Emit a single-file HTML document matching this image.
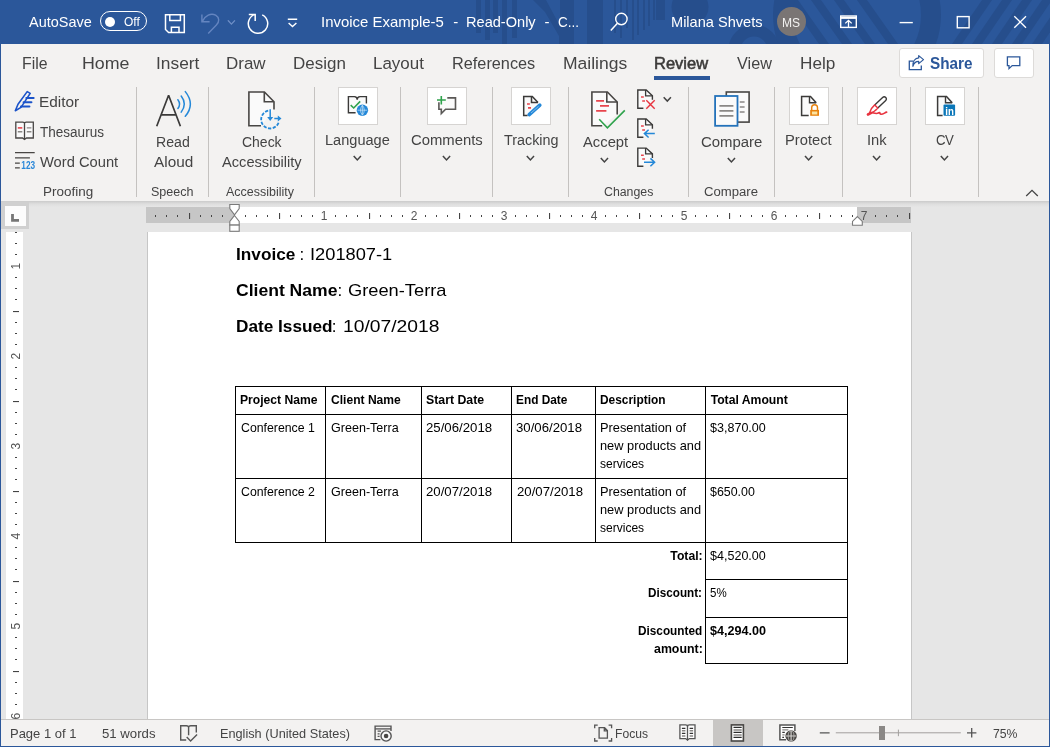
<!DOCTYPE html><html lang="en"><head><meta charset="utf-8"><title>Invoice Example-5 - Read-Only - Word</title><style>
*{box-sizing:border-box;margin:0;padding:0}
html,body{width:1050px;height:747px;overflow:hidden;background:#e6e6e6}
body{font-family:"Liberation Sans",sans-serif;color:#444;position:relative}
.t{position:absolute;white-space:pre;display:block;transform-origin:0 0}
.abs,svg{position:absolute}
svg{overflow:visible}
#win{position:absolute;left:0;top:0;width:1050px;height:747px;overflow:hidden;will-change:transform}
#titlebar{position:absolute;left:0;top:0;width:1050px;height:44px;background:#2b579a;color:#fff;overflow:hidden}
#tabs{position:absolute;left:0;top:44px;width:1050px;height:38px;background:#f3f2f1}
#ribbon{position:absolute;left:0;top:82px;width:1050px;height:119px;background:#f3f2f1}
#ribshadow{position:absolute;left:0;top:201px;width:1050px;height:6px;background:linear-gradient(#cbcbcb,#dedede 50%,#e6e6e6)}
#docarea{position:absolute;left:0;top:205px;width:1050px;height:514px}
#page{position:absolute;left:148px;top:27px;width:763px;height:487px;background:#fff;color:#000}
#status{position:absolute;left:0;top:719px;width:1050px;height:28px;background:#f3f2f1;border-top:1px solid #c8c6c4}
.sep{position:absolute;top:5px;width:1px;height:110px;background:#c4c2c0}
.ibox{position:absolute;top:5px;width:40px;height:38px;background:#fff;border:1px solid #d6d4d2}
.cell{position:absolute;border:1px solid #000}
.wb{position:absolute;background:#2b579a}
</style></head><body><div id="win">
<div id="titlebar">
<svg class="abs" style="left:0;top:0" width="1050" height="44" viewBox="0 0 1050 44"><g fill="#264e8c"><rect x="476" y="0" width="5" height="33"/><rect x="485" y="0" width="5" height="40"/><rect x="493" y="0" width="5" height="33"/><rect x="502" y="0" width="5" height="44"/><rect x="512" y="0" width="5" height="38"/><path d="M533 0 H546 L560 26 V0 H574 V44 H559 V36 L545 12 Z"/><rect x="587" y="0" width="16" height="44"/><rect x="614" y="0" width="2" height="33"/><rect x="620" y="0" width="2" height="38"/><rect x="626" y="0" width="2" height="28"/><rect x="632" y="0" width="2" height="40"/><rect x="637" y="0" width="2" height="35"/><rect x="643" y="0" width="2" height="30"/><rect x="648" y="0" width="2" height="26"/><rect x="653" y="0" width="2" height="20"/><circle cx="690" cy="7" r="18.5"/><rect x="656" y="0" width="9" height="20"/><circle cx="754" cy="50" r="19.5" fill="none" stroke="#264e8c" stroke-width="12"/><path d="M788 0 h10 l31 44 h-10 z"/><path d="M811 0 h10 l31 44 h-10 z"/><path d="M834 0 h10 l31 44 h-10 z"/><path d="M857 0 h10 l31 44 h-10 z"/><circle cx="857" cy="15" r="74" fill="none" stroke="#264e8c" stroke-width="20"/><path d="M952 44 h10 l30 -44 h-10 z"/><path d="M972 44 h10 l30 -44 h-10 z"/><path d="M992 44 h10 l30 -44 h-10 z"/><path d="M1012 44 h10 l30 -44 h-10 z"/><path d="M1032 44 h10 l30 -44 h-10 z"/></g></svg>
<span id="t1" class="t " style="left:29.10px;top:12.00px;font-size:15px;line-height:19px;transform:scaleX(0.9644);color:#fff;">AutoSave</span>
<div class="abs" style="left:100px;top:11px;width:47px;height:20px;border:1.3px solid #fff;border-radius:10px"></div>
<div class="abs" style="left:105px;top:16.5px;width:10px;height:10px;border-radius:5px;background:#fff"></div>
<span id="t2" class="t " style="left:124.23px;top:13.00px;font-size:13px;line-height:17px;transform:scaleX(0.9214);color:#fff;">Off</span>
<svg class="abs" style="left:0;top:0" width="1" height="1" ><g transform="translate(0 0)"><path d="M165.5 14.7 H184.3 V32.6 H168.6 L165.5 29.5 Z M169.8 14.7 V20.6 H180.4 V14.7 M171.4 32.6 V27.3 H179 V32.6" fill="none" stroke="#fff" stroke-width="1.5" stroke-linejoin="miter"/></g></svg>
<svg class="abs" style="left:0;top:0" width="1" height="1" ><g transform="translate(0 0)"><path d="M201.9 14.4 V21.8 H209.6 M202.3 21.4 C205 15.5 211 12.6 215.6 15.2 C219.6 17.6 219.6 21.8 216.4 25 L208.2 33.4" fill="none" stroke="#6485c0" stroke-width="1.4"/></g></svg>
<svg class="abs" style="left:0;top:0" width="1" height="1" ><g transform="translate(0 0)"><path d="M262.2 14.9 A9.7 9.7 0 1 1 255.1 14.4 M248.8 14.4 H255.2 V20.9" fill="none" stroke="#fff" stroke-width="1.5"/></g></svg>
<svg class="abs" style="left:0;top:0" width="1" height="1" ><g transform="translate(0 0)"><path d="M287.8 19.3 H297.2 M288.6 22.9 L292.5 26.5 L296.4 22.9" fill="none" stroke="#fff" stroke-width="1.4"/></g></svg>
<svg class="abs" style="left:0;top:0" width="1" height="1"><path d="M228.30 20.80 l3.10 3.30 l3.10 -3.30" fill="none" stroke="#6f8fc6" stroke-width="1.3" stroke-linecap="square" stroke-linejoin="miter"/></svg>
<span id="t3" class="t " style="left:320.97px;top:12.00px;font-size:15px;line-height:19px;transform:scaleX(0.9956);color:#fff;">Invoice Example-5</span>
<span id="t4" class="t " style="left:453.20px;top:12.00px;font-size:15px;line-height:19px;color:#fff;">-</span>
<span id="t5" class="t " style="left:465.50px;top:12.00px;font-size:15px;line-height:19px;transform:scaleX(0.9716);color:#fff;">Read-Only</span>
<span id="t6" class="t " style="left:544.53px;top:12.00px;font-size:15px;line-height:19px;color:#fff;">-</span>
<span id="t7" class="t " style="left:557.74px;top:12.00px;font-size:15px;line-height:19px;transform:scaleX(0.9006);color:#fff;">C...</span>
<svg class="abs" style="left:0;top:0" width="1" height="1" ><g transform="translate(0 0)"><circle cx="621.4" cy="19" r="5.7" fill="none" stroke="#fff" stroke-width="1.4"/><path d="M617.4 23.2 L610.8 30.6" stroke="#fff" stroke-width="1.5" fill="none"/></g></svg>
<span id="t8" class="t " style="left:671.13px;top:12.00px;font-size:15px;line-height:19px;transform:scaleX(0.9713);color:#fff;">Milana Shvets</span>
<div class="abs" style="left:777px;top:7px;width:29px;height:29px;border-radius:50%;background:#7a7574"></div>
<span id="t9" class="t " style="left:782.02px;top:15.00px;font-size:12px;line-height:16px;transform:scaleX(1.0047);color:#f3f2f1;">MS</span>
<svg class="abs" style="left:0;top:0" width="1" height="1" ><g transform="translate(0 0)"><rect x="840.7" y="16" width="15.6" height="11.4" fill="none" stroke="#fff" stroke-width="1.4"/><path d="M840.7 17.8 H856.3" stroke="#fff" stroke-width="2.2"/><path d="M848.5 27 V20.6 M845.3 23.4 L848.5 20.3 L851.7 23.4" fill="none" stroke="#fff" stroke-width="1.3"/></g></svg>
<svg class="abs" style="left:0;top:0" width="1" height="1" ><g transform="translate(0 0)"><path d="M899.6 22.6 H912.8" stroke="#fff" stroke-width="1.4"/><rect x="957.3" y="16.6" width="11.8" height="11.2" fill="none" stroke="#fff" stroke-width="1.4"/><path d="M1014.3 16.2 L1026 27.8 M1026 16.2 L1014.3 27.8" stroke="#fff" stroke-width="1.4"/></g></svg>
</div>
<div id="tabs">
<span id="t10" class="t " style="left:21.66px;top:9.00px;font-size:16.3px;line-height:20px;transform:scaleX(0.9708);">File</span>
<span id="t11" class="t " style="left:82.45px;top:9.00px;font-size:16.3px;line-height:20px;transform:scaleX(1.0937);">Home</span>
<span id="t12" class="t " style="left:156.09px;top:9.00px;font-size:16.3px;line-height:20px;transform:scaleX(1.0648);">Insert</span>
<span id="t13" class="t " style="left:226.27px;top:9.00px;font-size:16.3px;line-height:20px;transform:scaleX(1.0421);">Draw</span>
<span id="t14" class="t " style="left:293.25px;top:9.00px;font-size:16.3px;line-height:20px;transform:scaleX(1.0424);">Design</span>
<span id="t15" class="t " style="left:372.66px;top:9.00px;font-size:16.3px;line-height:20px;transform:scaleX(1.0413);">Layout</span>
<span id="t16" class="t " style="left:452.01px;top:9.00px;font-size:16.3px;line-height:20px;">References</span>
<span id="t17" class="t " style="left:563.39px;top:9.00px;font-size:16.3px;line-height:20px;transform:scaleX(1.0738);">Mailings</span>
<span id="t18" class="t " style="left:653.80px;top:9.00px;font-size:16.3px;line-height:20px;transform:scaleX(1.0133);color:#3b3a39;-webkit-text-stroke:0.55px #3b3a39;">Review</span>
<span id="t19" class="t " style="left:737.13px;top:9.00px;font-size:16.3px;line-height:20px;transform:scaleX(0.9961);">View</span>
<span id="t20" class="t " style="left:800.00px;top:9.00px;font-size:16.3px;line-height:20px;transform:scaleX(1.0543);">Help</span>
<div class="abs" style="left:654px;top:32px;width:56px;height:4px;background:#2b579a"></div>
<div class="abs" style="left:899px;top:4px;width:85px;height:30px;background:#fff;border:1px solid #dddbd9;border-radius:3px"></div>
<svg class="abs" style="left:0;top:0" width="1" height="1" ><g transform="translate(0 -44)"><path d="M913.4 61.1 H909.3 V69.7 H921.3 V65.4" fill="none" stroke="#2b579a" stroke-width="1.3"/><path d="M918.7 55.6 L923.5 59.6 L918.7 63.6 V61.3 C915.6 61.3 913.8 63 912.9 66.3 C912.6 61.4 915 58.2 918.7 57.9 Z" fill="none" stroke="#2b579a" stroke-width="1.2" stroke-linejoin="round"/></g></svg>
<span id="t21" class="t " style="left:929.89px;top:9.00px;font-size:16.3px;line-height:20px;transform:scaleX(0.9387);font-weight:700;color:#2b579a;">Share</span>
<div class="abs" style="left:994px;top:4px;width:40px;height:30px;background:#fff;border:1px solid #dddbd9;border-radius:3px"></div>
<svg class="abs" style="left:0;top:0" width="1" height="1" ><g transform="translate(0 -44)"><path d="M1007.4 56.9 H1019.8 V65.6 H1012.2 L1009 68.6 V65.6 H1007.4 Z" fill="none" stroke="#2b579a" stroke-width="1.3" stroke-linejoin="miter"/></g></svg>
</div>
<div id="ribbon">
<div class="sep" style="left:136px"></div>
<div class="sep" style="left:208px"></div>
<div class="sep" style="left:314px"></div>
<div class="sep" style="left:400px"></div>
<div class="sep" style="left:492px"></div>
<div class="sep" style="left:568px"></div>
<div class="sep" style="left:688px"></div>
<div class="sep" style="left:774px"></div>
<div class="sep" style="left:842px"></div>
<div class="sep" style="left:910px"></div>
<div class="sep" style="left:978px"></div>
<div class="ibox" style="left:338px"></div>
<div class="ibox" style="left:427px"></div>
<div class="ibox" style="left:511px"></div>
<div class="ibox" style="left:789px"></div>
<div class="ibox" style="left:857px"></div>
<div class="ibox" style="left:925px"></div>
<span id="t22" class="t " style="left:39.13px;top:10.00px;font-size:15.2px;line-height:19px;transform:scaleX(1.0107);">Editor</span>
<span id="t23" class="t " style="left:40.02px;top:40.00px;font-size:15.2px;line-height:19px;transform:scaleX(0.8908);">Thesaurus</span>
<span id="t24" class="t " style="left:39.82px;top:70.00px;font-size:15.2px;line-height:19px;transform:scaleX(0.9679);">Word Count</span>
<span id="t25" class="t " style="left:43.12px;top:102.00px;font-size:12.5px;line-height:16px;transform:scaleX(1.0776);">Proofing</span>
<span id="t26" class="t " style="left:156.26px;top:50.00px;font-size:15.2px;line-height:19px;transform:scaleX(0.9297);">Read</span>
<span id="t27" class="t " style="left:154.16px;top:70.00px;font-size:15.2px;line-height:19px;transform:scaleX(1.0101);">Aloud</span>
<span id="t28" class="t " style="left:151.02px;top:102.00px;font-size:12.5px;line-height:16px;transform:scaleX(1.0030);">Speech</span>
<span id="t29" class="t " style="left:241.60px;top:50.00px;font-size:15.2px;line-height:19px;transform:scaleX(0.9201);">Check</span>
<span id="t30" class="t " style="left:221.80px;top:70.00px;font-size:15.2px;line-height:19px;transform:scaleX(0.9635);">Accessibility</span>
<span id="t31" class="t " style="left:226.09px;top:102.00px;font-size:12.5px;line-height:16px;transform:scaleX(0.9976);">Accessibility</span>
<span id="t32" class="t " style="left:325.22px;top:48.00px;font-size:15.2px;line-height:19px;transform:scaleX(0.9592);">Language</span>
<span id="t33" class="t " style="left:410.54px;top:48.00px;font-size:15.2px;line-height:19px;transform:scaleX(0.9776);">Comments</span>
<span id="t34" class="t " style="left:503.72px;top:48.00px;font-size:15.2px;line-height:19px;transform:scaleX(0.9449);">Tracking</span>
<span id="t35" class="t " style="left:582.80px;top:50.00px;font-size:15.2px;line-height:19px;transform:scaleX(0.9732);">Accept</span>
<span id="t36" class="t " style="left:603.74px;top:102.00px;font-size:12.5px;line-height:16px;transform:scaleX(0.9861);">Changes</span>
<span id="t37" class="t " style="left:700.53px;top:50.00px;font-size:15.2px;line-height:19px;transform:scaleX(0.9826);">Compare</span>
<span id="t38" class="t " style="left:704.35px;top:102.00px;font-size:12.5px;line-height:16px;transform:scaleX(1.0514);">Compare</span>
<span id="t39" class="t " style="left:784.87px;top:48.00px;font-size:15.2px;line-height:19px;transform:scaleX(0.9701);">Protect</span>
<span id="t40" class="t " style="left:867.15px;top:48.00px;font-size:15.2px;line-height:19px;transform:scaleX(0.9685);">Ink</span>
<span id="t41" class="t " style="left:935.67px;top:48.00px;font-size:15.2px;line-height:19px;transform:scaleX(0.8698);letter-spacing:-0.593px;">CV</span>
<svg class="abs" style="left:0;top:0" width="1" height="1"><path d="M354.20 74.60 l3.10 3.30 l3.10 -3.30" fill="none" stroke="#444" stroke-width="1.5" stroke-linecap="square" stroke-linejoin="miter"/></svg>
<svg class="abs" style="left:0;top:0" width="1" height="1"><path d="M443.40 74.60 l3.10 3.30 l3.10 -3.30" fill="none" stroke="#444" stroke-width="1.5" stroke-linecap="square" stroke-linejoin="miter"/></svg>
<svg class="abs" style="left:0;top:0" width="1" height="1"><path d="M527.30 74.60 l3.10 3.30 l3.10 -3.30" fill="none" stroke="#444" stroke-width="1.5" stroke-linecap="square" stroke-linejoin="miter"/></svg>
<svg class="abs" style="left:0;top:0" width="1" height="1"><path d="M805.50 74.60 l3.10 3.30 l3.10 -3.30" fill="none" stroke="#444" stroke-width="1.5" stroke-linecap="square" stroke-linejoin="miter"/></svg>
<svg class="abs" style="left:0;top:0" width="1" height="1"><path d="M873.50 74.60 l3.10 3.30 l3.10 -3.30" fill="none" stroke="#444" stroke-width="1.5" stroke-linecap="square" stroke-linejoin="miter"/></svg>
<svg class="abs" style="left:0;top:0" width="1" height="1"><path d="M941.30 74.60 l3.10 3.30 l3.10 -3.30" fill="none" stroke="#444" stroke-width="1.5" stroke-linecap="square" stroke-linejoin="miter"/></svg>
<svg class="abs" style="left:0;top:0" width="1" height="1"><path d="M601.30 76.60 l3.10 3.30 l3.10 -3.30" fill="none" stroke="#444" stroke-width="1.5" stroke-linecap="square" stroke-linejoin="miter"/></svg>
<svg class="abs" style="left:0;top:0" width="1" height="1"><path d="M728.30 76.60 l3.10 3.30 l3.10 -3.30" fill="none" stroke="#444" stroke-width="1.5" stroke-linecap="square" stroke-linejoin="miter"/></svg>
<svg class="abs" style="left:0;top:0" width="1" height="1"><path d="M664.20 15.80 l3.10 3.30 l3.10 -3.30" fill="none" stroke="#444" stroke-width="1.5" stroke-linecap="square" stroke-linejoin="miter"/></svg>
<svg class="abs" style="left:0;top:0" width="1" height="1"><path d="M1026.2 114.0 l5.8 -5.6 l5.8 5.6" fill="none" stroke="#444" stroke-width="1.3"/></svg>
<svg class="abs" style="left:0;top:0" width="1" height="1" ><g transform="translate(0 -82)"><path d="M15.3 110.7 L18 104.2 L27.2 91.6 L30.2 93.4 L21 107.4 Z" fill="#f3f2f1" stroke="#1b53c9" stroke-width="1.6" stroke-linejoin="round"/><path d="M26.4 98 H33.6 M23.6 102.3 H31.4 M21 106.5 H29.4" stroke="#1b53c9" stroke-width="2.1" stroke-linecap="round"/></g></svg>
<svg class="abs" style="left:0;top:0" width="1" height="1" ><g transform="translate(0 -82)"><path d="M24.5 122.9 V139.4 M15.8 122.2 H22.8 Q24.5 122.2 24.5 123.6 Q24.5 122.2 26.2 122.2 H33.3 V138 H26.5 L24.5 139.5 L22.5 138 H15.8 Z" fill="#fafafa" stroke="#484644" stroke-width="1.3"/><path d="M17.8 127.9 H22.3" stroke="#e8464e" stroke-width="1.6"/><path d="M17.8 131.8 H22.3 M26.8 127.9 H31.4 M26.8 131.8 H31.4" stroke="#8a8886" stroke-width="1.4"/></g></svg>
<svg class="abs" style="left:0;top:0" width="1" height="1" ><g transform="translate(0 -82)"><path d="M15 152.6 H34.7 M15 157.9 H29.9 M15 163.1 H19.8 M15 167.9 H19.8" stroke="#484644" stroke-width="1.4"/><text x="21.3" y="168.6" font-family="Liberation Sans, sans-serif" font-weight="700" font-size="10.2" fill="#2b88d8" textLength="13.8" lengthAdjust="spacingAndGlyphs">123</text></g></svg>
<svg class="abs" style="left:0;top:0" width="1" height="1" ><g transform="translate(0 -82)"><path d="M156.7 126.2 L168.6 95.2 L180.4 126.2 M161.4 114.8 H175.8" fill="none" stroke="#3b3a39" stroke-width="1.7" stroke-linejoin="bevel"/><path d="M177.9 99.7 Q181.2 104.1 177.9 108.5 M181.2 96 Q187.4 104 181.2 112.1 M185.3 91.6 Q195.4 104 185.3 116.3" fill="none" stroke="#2488d8" stroke-width="1.5" stroke-linecap="round"/></g></svg>
<svg class="abs" style="left:0;top:0" width="1" height="1" ><g transform="translate(0 -82)"><path d="M261 125.8 H248.9 V92 H264.4 L274 101.8 V109.6" fill="#fafafa" stroke="#484644" stroke-width="1.6"/><path d="M264.3 92 V101.8 H274" fill="none" stroke="#484644" stroke-width="1.6"/><path d="M268.2 110.7 A9 9 0 1 0 278.9 121.6" fill="none" stroke="#2488d8" stroke-width="1.8" stroke-dasharray="3.3 1.5"/><path d="M270.2 109.2 V118 M274.3 118.4 H279" stroke="#2488d8" stroke-width="1.5" fill="none"/><path d="M267.2 117 H273.2 L270.2 121 Z M277.8 115.4 L281.5 118.4 L277.8 121.4 Z" fill="#2488d8"/></g></svg>
<svg class="abs" style="left:0;top:0" width="1" height="1" ><g transform="translate(0 -82)"><path d="M355.6 112.8 H348.4 V96.6 H354.4 Q357.2 96.6 357.2 99.8 Q357.2 96.6 360 96.6 H366.4 V103.6" fill="#fafafa" stroke="#3b3a39" stroke-width="1.4"/><path d="M350.7 105.2 L353.7 108 L360.2 101.4" fill="none" stroke="#2fa24c" stroke-width="1.6"/><circle cx="362.4" cy="110.2" r="5.7" fill="#2488d8"/><path d="M357.6 110.2 H367.2 M362.4 105.4 V115 M362.4 105.2 Q358.6 110.2 362.4 115.2 Q366.2 110.2 362.4 105.2" fill="none" stroke="#cfe6f8" stroke-width="0.7"/></g></svg>
<svg class="abs" style="left:0;top:0" width="1" height="1" ><g transform="translate(0 -82)"><path d="M447.3 97.9 H455.5 V109.3 H445.6 L441.3 113.6 V109.3 H438.9 V102.2" fill="#fafafa" stroke="#5a5856" stroke-width="1.6"/><path d="M437 100 H445.8 M441.3 95.9 V104.6" stroke="#2fa24c" stroke-width="1.6"/></g></svg>
<svg class="abs" style="left:0;top:0" width="1" height="1" ><g transform="translate(0 -82)"><path d="M527.6 115.5 H523.7 V96.6 H532.3 L538 102.5" fill="#fafafa" stroke="#3b3a39" stroke-width="1.5"/><path d="M531.5 96.6 V102.6 H538" fill="none" stroke="#3b3a39" stroke-width="1.5"/><path d="M527 104 H529.9 M528 107.8 H531" stroke="#e8464e" stroke-width="1.7"/><path d="M529.2 114.6 L539.8 105.2" stroke="#2488d8" stroke-width="3.6" stroke-linecap="round"/><path d="M531 113 L538.6 106.3" stroke="#a9d3f2" stroke-width="0.7"/><path d="M528.4 115.4 L529.4 113.2 L530.6 114.6 Z" fill="#2488d8"/></g></svg>
<svg class="abs" style="left:0;top:0" width="1" height="1" ><g transform="translate(0 -82)"><path d="M602.2 125.8 H591.9 V92 H607.4 L617.2 102 V114.4" fill="#fafafa" stroke="#484644" stroke-width="1.6"/><path d="M606.8 92 V102 H617.2" fill="none" stroke="#484644" stroke-width="1.6"/><path d="M596.1 100.8 H604 M600 105.9 H609 M596.1 110.8 H606.4" stroke="#e8464e" stroke-width="1.8"/><path d="M599.2 119.3 L607.4 127.8 L624.8 110.4" fill="none" stroke="#2fa24c" stroke-width="1.6"/></g></svg>
<svg class="abs" style="left:0;top:0" width="1" height="1" ><g transform="translate(0 -82)"><path d="M643.4 108.2 H637.8 V90.0 H646.2 L652.4 95.8 V99.8" fill="#fafafa" stroke="#3b3a39" stroke-width="1.4"/><path d="M645.6 90.0 V95.8 H652.4" fill="none" stroke="#3b3a39" stroke-width="1.3"/><path d="M641 97.1 H643.8 M642.2 100.9 H645" stroke="#e8464e" stroke-width="1.5"/><path d="M646.3 100.3 L654.7 108.7 M654.7 100.3 L646.3 108.7" stroke="#e8333f" stroke-width="1.4"/></g></svg>
<svg class="abs" style="left:0;top:0" width="1" height="1" ><g transform="translate(0 -82)"><path d="M643.4 137.2 H637.8 V119.0 H646.2 L652.4 124.8 V128.8" fill="#fafafa" stroke="#3b3a39" stroke-width="1.4"/><path d="M645.6 119.0 V124.8 H652.4" fill="none" stroke="#3b3a39" stroke-width="1.3"/><path d="M641 126.1 H643.8 M642.2 129.9 H645" stroke="#e8464e" stroke-width="1.5"/><path d="M654.8 133.6 H644.6 M648.6 129.7 L644.4 133.6 L648.6 137.5" fill="none" stroke="#2488d8" stroke-width="1.5"/></g></svg>
<svg class="abs" style="left:0;top:0" width="1" height="1" ><g transform="translate(0 -82)"><path d="M643.4 166.3 H637.8 V148.1 H646.2 L652.4 153.9 V157.9" fill="#fafafa" stroke="#3b3a39" stroke-width="1.4"/><path d="M645.6 148.1 V153.9 H652.4" fill="none" stroke="#3b3a39" stroke-width="1.3"/><path d="M641 155.2 H643.8 M642.2 159.0 H645" stroke="#e8464e" stroke-width="1.5"/><path d="M644 162.3 H654.4 M650.4 158.4 L654.6 162.3 L650.4 166.2" fill="none" stroke="#2488d8" stroke-width="1.5"/></g></svg>
<svg class="abs" style="left:0;top:0" width="1" height="1" ><g transform="translate(0 -82)"><rect x="726.3" y="92" width="22.8" height="30.1" fill="#fafafa" stroke="#484644" stroke-width="1.6"/><path d="M739.8 102.1 H744.6 M739.8 107.1 H744.6 M739.8 112 H744.6" stroke="#8a8886" stroke-width="1.5"/><rect x="715.1" y="96" width="22.4" height="29.8" fill="#fafafa" stroke="#2372ba" stroke-width="1.8"/><path d="M719.4 105.9 H733.4 M719.4 110.8 H733.4 M719.4 115.8 H733.4" stroke="#8a8886" stroke-width="1.7"/></g></svg>
<svg class="abs" style="left:0;top:0" width="1" height="1" ><g transform="translate(0 -82)"><path d="M808.7 115.5 H801.6 V96.6 H810.5 L816.2 102.8" fill="#fafafa" stroke="#3b3a39" stroke-width="1.5"/><path d="M809.5 96.6 V102.8 H816.2" fill="none" stroke="#3b3a39" stroke-width="1.4"/><path d="M811.7 110 V107.6 A2.9 2.9 0 0 1 817.5 107.6 V110" fill="none" stroke="#e8820c" stroke-width="1.4"/><rect x="810.2" y="109.9" width="8.8" height="5.9" fill="#e8820c"/><rect x="811.9" y="111.5" width="5.4" height="3" fill="#fbe3a0"/></g></svg>
<svg class="abs" style="left:0;top:0" width="1" height="1" ><g transform="translate(0 -82)"><path d="M874.7 104.9 L882.6 97.4 A2.2 2.2 0 0 1 885.7 100.6 L877.8 108.1" fill="#fff" stroke="#3b3a39" stroke-width="1.4"/><path d="M874.7 104.9 C871.6 107.4 870.4 110 869.2 113.4 C872.6 112.6 875.4 111 877.8 108.1 Z" fill="#fff" stroke="#e8333f" stroke-width="1.4" stroke-linejoin="round"/><path d="M867.6 114.3 C869.4 113.4 871 112.4 873 112.8 C875 113.4 876.6 114.2 878.8 112.8 C880.2 111.9 879.4 113.8 880.8 114.2 C883 114.6 884.8 112.6 886.6 112.2" fill="none" stroke="#e8333f" stroke-width="1.7" stroke-linecap="round"/><path d="M868 114.6 L871.2 112.9" stroke="#e8333f" stroke-width="2.4" stroke-linecap="round"/></g></svg>
<svg class="abs" style="left:0;top:0" width="1" height="1" ><g transform="translate(0 -82)"><path d="M942.6 115.5 H937.6 V96.6 H946.5 L952.2 102.8" fill="#fafafa" stroke="#3b3a39" stroke-width="1.5"/><path d="M945.5 96.6 V102.8 H952.2" fill="none" stroke="#3b3a39" stroke-width="1.4"/><rect x="943.5" y="104.6" width="11.6" height="11.2" rx="1" fill="#0a76b8"/><text x="945.3" y="114.6" font-family="Liberation Sans, sans-serif" font-weight="700" font-size="11" fill="#fff" textLength="8.6" lengthAdjust="spacingAndGlyphs">in</text></g></svg>
</div>
<div id="ribshadow"></div>
<div id="docarea">
<div class="abs" style="left:1px;top:-3px;width:28px;height:27px;background:#d0d0d0"></div>
<div class="abs" style="left:5px;top:1px;width:21px;height:19.5px;background:#fcfcfc"></div>
<svg class="abs" style="left:0;top:0" width="1" height="1"><path d="M12.5 9 V15.4 H19" fill="none" stroke="#767676" stroke-width="2.8"/></svg>
<div class="abs" style="left:146px;top:2px;width:765px;height:16px;background:#c6c6c6"></div>
<div class="abs" style="left:234px;top:2px;width:623px;height:16px;background:#fff"></div>
<div class="abs" style="left:6px;top:27px;width:17px;height:487px;background:#fff"></div>
<svg class="abs" style="left:0;top:0" width="1" height="1" font-family="Liberation Sans, sans-serif" font-size="12" fill="#555"><rect x="155" y="10" width="1" height="2" fill="#444"/><rect x="166" y="10" width="1" height="2" fill="#444"/><rect x="177" y="10" width="1" height="2" fill="#444"/><rect x="189" y="8" width="1.1" height="6" fill="#444"/><rect x="200" y="10" width="1" height="2" fill="#444"/><rect x="211" y="10" width="1" height="2" fill="#444"/><rect x="222" y="10" width="1" height="2" fill="#444"/><rect x="245" y="10" width="1" height="2" fill="#444"/><rect x="256" y="10" width="1" height="2" fill="#444"/><rect x="267" y="10" width="1" height="2" fill="#444"/><rect x="279" y="8" width="1.1" height="6" fill="#444"/><rect x="290" y="10" width="1" height="2" fill="#444"/><rect x="301" y="10" width="1" height="2" fill="#444"/><rect x="312" y="10" width="1" height="2" fill="#444"/><text x="324.1" y="15.2" text-anchor="middle">1</text><rect x="335" y="10" width="1" height="2" fill="#444"/><rect x="346" y="10" width="1" height="2" fill="#444"/><rect x="357" y="10" width="1" height="2" fill="#444"/><rect x="369" y="8" width="1.1" height="6" fill="#444"/><rect x="380" y="10" width="1" height="2" fill="#444"/><rect x="391" y="10" width="1" height="2" fill="#444"/><rect x="402" y="10" width="1" height="2" fill="#444"/><text x="414.1" y="15.2" text-anchor="middle">2</text><rect x="425" y="10" width="1" height="2" fill="#444"/><rect x="436" y="10" width="1" height="2" fill="#444"/><rect x="447" y="10" width="1" height="2" fill="#444"/><rect x="459" y="8" width="1.1" height="6" fill="#444"/><rect x="470" y="10" width="1" height="2" fill="#444"/><rect x="481" y="10" width="1" height="2" fill="#444"/><rect x="492" y="10" width="1" height="2" fill="#444"/><text x="504.1" y="15.2" text-anchor="middle">3</text><rect x="515" y="10" width="1" height="2" fill="#444"/><rect x="526" y="10" width="1" height="2" fill="#444"/><rect x="537" y="10" width="1" height="2" fill="#444"/><rect x="549" y="8" width="1.1" height="6" fill="#444"/><rect x="560" y="10" width="1" height="2" fill="#444"/><rect x="571" y="10" width="1" height="2" fill="#444"/><rect x="582" y="10" width="1" height="2" fill="#444"/><text x="594.1" y="15.2" text-anchor="middle">4</text><rect x="605" y="10" width="1" height="2" fill="#444"/><rect x="616" y="10" width="1" height="2" fill="#444"/><rect x="627" y="10" width="1" height="2" fill="#444"/><rect x="639" y="8" width="1.1" height="6" fill="#444"/><rect x="650" y="10" width="1" height="2" fill="#444"/><rect x="661" y="10" width="1" height="2" fill="#444"/><rect x="672" y="10" width="1" height="2" fill="#444"/><text x="684.1" y="15.2" text-anchor="middle">5</text><rect x="695" y="10" width="1" height="2" fill="#444"/><rect x="706" y="10" width="1" height="2" fill="#444"/><rect x="717" y="10" width="1" height="2" fill="#444"/><rect x="729" y="8" width="1.1" height="6" fill="#444"/><rect x="740" y="10" width="1" height="2" fill="#444"/><rect x="751" y="10" width="1" height="2" fill="#444"/><rect x="762" y="10" width="1" height="2" fill="#444"/><text x="774.1" y="15.2" text-anchor="middle">6</text><rect x="785" y="10" width="1" height="2" fill="#444"/><rect x="796" y="10" width="1" height="2" fill="#444"/><rect x="807" y="10" width="1" height="2" fill="#444"/><rect x="819" y="8" width="1.1" height="6" fill="#444"/><rect x="830" y="10" width="1" height="2" fill="#444"/><rect x="841" y="10" width="1" height="2" fill="#444"/><rect x="852" y="10" width="1" height="2" fill="#444"/><text x="864.1" y="15.2" text-anchor="middle">7</text><rect x="875" y="10" width="1" height="2" fill="#444"/><rect x="886" y="10" width="1" height="2" fill="#444"/><rect x="897" y="10" width="1" height="2" fill="#444"/><rect x="909" y="8" width="1.1" height="6" fill="#444"/><rect x="15" y="27" width="2" height="1" fill="#444"/><rect x="15" y="38" width="2" height="1" fill="#444"/><rect x="15" y="49" width="2" height="1" fill="#444"/><text transform="translate(19.8 61.2) rotate(-90)" text-anchor="middle">1</text><rect x="15" y="72" width="2" height="1" fill="#444"/><rect x="15" y="83" width="2" height="1" fill="#444"/><rect x="15" y="94" width="2" height="1" fill="#444"/><rect x="13" y="106" width="6" height="1.1" fill="#444"/><rect x="15" y="117" width="2" height="1" fill="#444"/><rect x="15" y="128" width="2" height="1" fill="#444"/><rect x="15" y="139" width="2" height="1" fill="#444"/><text transform="translate(19.8 151.2) rotate(-90)" text-anchor="middle">2</text><rect x="15" y="162" width="2" height="1" fill="#444"/><rect x="15" y="173" width="2" height="1" fill="#444"/><rect x="15" y="184" width="2" height="1" fill="#444"/><rect x="13" y="196" width="6" height="1.1" fill="#444"/><rect x="15" y="207" width="2" height="1" fill="#444"/><rect x="15" y="218" width="2" height="1" fill="#444"/><rect x="15" y="229" width="2" height="1" fill="#444"/><text transform="translate(19.8 241.2) rotate(-90)" text-anchor="middle">3</text><rect x="15" y="252" width="2" height="1" fill="#444"/><rect x="15" y="263" width="2" height="1" fill="#444"/><rect x="15" y="274" width="2" height="1" fill="#444"/><rect x="13" y="286" width="6" height="1.1" fill="#444"/><rect x="15" y="297" width="2" height="1" fill="#444"/><rect x="15" y="308" width="2" height="1" fill="#444"/><rect x="15" y="319" width="2" height="1" fill="#444"/><text transform="translate(19.8 331.2) rotate(-90)" text-anchor="middle">4</text><rect x="15" y="342" width="2" height="1" fill="#444"/><rect x="15" y="353" width="2" height="1" fill="#444"/><rect x="15" y="364" width="2" height="1" fill="#444"/><rect x="13" y="376" width="6" height="1.1" fill="#444"/><rect x="15" y="387" width="2" height="1" fill="#444"/><rect x="15" y="398" width="2" height="1" fill="#444"/><rect x="15" y="409" width="2" height="1" fill="#444"/><text transform="translate(19.8 421.2) rotate(-90)" text-anchor="middle">5</text><rect x="15" y="432" width="2" height="1" fill="#444"/><rect x="15" y="443" width="2" height="1" fill="#444"/><rect x="15" y="454" width="2" height="1" fill="#444"/><rect x="13" y="466" width="6" height="1.1" fill="#444"/><rect x="15" y="477" width="2" height="1" fill="#444"/><rect x="15" y="488" width="2" height="1" fill="#444"/><rect x="15" y="499" width="2" height="1" fill="#444"/><text transform="translate(19.8 511.2) rotate(-90)" text-anchor="middle">6</text></svg>
<svg class="abs" style="left:0;top:0" width="1" height="1" ><g transform="translate(0 -205)"><path d="M229.8 204.5 H239.2 V208.6 L234.5 214.8 L229.8 208.6 Z" fill="#fff" stroke="#7a7a7a" stroke-width="1.1"/><path d="M234.5 215.5 L239.2 221.4 V225.1 H229.8 V221.4 Z" fill="#fff" stroke="#7a7a7a" stroke-width="1.1"/><rect x="229.8" y="225.1" width="9.4" height="6.2" fill="#fff" stroke="#7a7a7a" stroke-width="1.1"/><path d="M857.4 216.6 L862.3 221.4 V225.3 H852.5 V221.4 Z" fill="#fff" stroke="#7a7a7a" stroke-width="1.1"/></g></svg>
<div class="abs" style="left:147px;top:27px;width:765px;height:487px;background:#c6c6c6"></div>
<div id="page">
<span id="t42" class="t " style="left:87.81px;top:12.00px;font-size:17px;line-height:21px;transform:scaleX(1.0131);font-weight:700;color:#000;">Invoice</span>
<span id="t43" class="t " style="left:151.41px;top:12.00px;font-size:17px;line-height:21px;color:#000;">:</span>
<span id="t44" class="t " style="left:161.82px;top:12.00px;font-size:17px;line-height:21px;transform:scaleX(1.0744);color:#000;">I201807-1</span>
<span id="t45" class="t " style="left:88.24px;top:48.00px;font-size:17px;line-height:21px;transform:scaleX(1.0323);font-weight:700;color:#000;">Client Name</span>
<span id="t46" class="t " style="left:189.39px;top:48.00px;font-size:17px;line-height:21px;color:#000;">:</span>
<span id="t47" class="t " style="left:200.02px;top:48.00px;font-size:17px;line-height:21px;transform:scaleX(1.0744);color:#000;">Green-Terra</span>
<span id="t48" class="t " style="left:87.82px;top:84.00px;font-size:17px;line-height:21px;transform:scaleX(1.0114);font-weight:700;color:#000;">Date Issued</span>
<span id="t49" class="t " style="left:183.73px;top:84.00px;font-size:17px;line-height:21px;color:#000;">:</span>
<span id="t50" class="t " style="left:195.32px;top:84.00px;font-size:17px;line-height:21px;transform:scaleX(1.1336);color:#000;">10/07/2018</span>
<div class="cell" style="left:87px;top:154px;width:91px;height:29px"></div>
<div class="cell" style="left:177px;top:154px;width:97px;height:29px"></div>
<div class="cell" style="left:273px;top:154px;width:91px;height:29px"></div>
<div class="cell" style="left:363px;top:154px;width:85px;height:29px"></div>
<div class="cell" style="left:447px;top:154px;width:111px;height:29px"></div>
<div class="cell" style="left:557px;top:154px;width:143px;height:29px"></div>
<div class="cell" style="left:87px;top:182px;width:91px;height:65px"></div>
<div class="cell" style="left:177px;top:182px;width:97px;height:65px"></div>
<div class="cell" style="left:273px;top:182px;width:91px;height:65px"></div>
<div class="cell" style="left:363px;top:182px;width:85px;height:65px"></div>
<div class="cell" style="left:447px;top:182px;width:111px;height:65px"></div>
<div class="cell" style="left:557px;top:182px;width:143px;height:65px"></div>
<div class="cell" style="left:87px;top:246px;width:91px;height:65px"></div>
<div class="cell" style="left:177px;top:246px;width:97px;height:65px"></div>
<div class="cell" style="left:273px;top:246px;width:91px;height:65px"></div>
<div class="cell" style="left:363px;top:246px;width:85px;height:65px"></div>
<div class="cell" style="left:447px;top:246px;width:111px;height:65px"></div>
<div class="cell" style="left:557px;top:246px;width:143px;height:65px"></div>
<div class="cell" style="left:557px;top:310px;width:143px;height:38px"></div>
<div class="cell" style="left:557px;top:347px;width:143px;height:39px"></div>
<div class="cell" style="left:557px;top:385px;width:143px;height:47px"></div>
<span id="t51" class="t " style="left:91.59px;top:160.00px;font-size:12.2px;line-height:16px;transform:scaleX(0.9947);font-weight:700;color:#000;">Project Name</span>
<span id="t52" class="t " style="left:182.85px;top:160.00px;font-size:12.2px;line-height:16px;transform:scaleX(0.9907);font-weight:700;color:#000;">Client Name</span>
<span id="t53" class="t " style="left:277.60px;top:160.00px;font-size:12.2px;line-height:16px;transform:scaleX(1.0098);font-weight:700;color:#000;">Start Date</span>
<span id="t54" class="t " style="left:367.61px;top:160.00px;font-size:12.2px;line-height:16px;transform:scaleX(0.9719);font-weight:700;color:#000;">End Date</span>
<span id="t55" class="t " style="left:452.06px;top:160.00px;font-size:12.2px;line-height:16px;transform:scaleX(0.9776);font-weight:700;color:#000;">Description</span>
<span id="t56" class="t " style="left:562.64px;top:160.00px;font-size:12.2px;line-height:16px;font-weight:700;color:#000;">Total Amount</span>
<span id="t57" class="t " style="left:92.73px;top:188.00px;font-size:12.2px;line-height:16px;transform:scaleX(1.0096);color:#000;">Conference 1</span>
<span id="t58" class="t " style="left:182.73px;top:188.00px;font-size:12.2px;line-height:16px;transform:scaleX(1.0297);color:#000;">Green-Terra</span>
<span id="t59" class="t " style="left:278.35px;top:188.00px;font-size:12.2px;line-height:16px;transform:scaleX(1.0833);color:#000;">25/06/2018</span>
<span id="t60" class="t " style="left:367.63px;top:188.00px;font-size:12.2px;line-height:16px;transform:scaleX(1.0824);color:#000;">30/06/2018</span>
<span id="t61" class="t " style="left:451.60px;top:188.00px;font-size:12.2px;line-height:16px;transform:scaleX(1.0506);color:#000;">Presentation of</span>
<span id="t62" class="t " style="left:451.84px;top:206.00px;font-size:12.2px;line-height:16px;transform:scaleX(1.0506);color:#000;">new products and</span>
<span id="t63" class="t " style="left:452.27px;top:224.00px;font-size:12.2px;line-height:16px;transform:scaleX(0.9872);color:#000;">services</span>
<span id="t64" class="t " style="left:562.29px;top:188.00px;font-size:12.2px;line-height:16px;transform:scaleX(1.0294);color:#000;">$3,870.00</span>
<span id="t65" class="t " style="left:92.73px;top:252.00px;font-size:12.2px;line-height:16px;transform:scaleX(1.0102);color:#000;">Conference 2</span>
<span id="t66" class="t " style="left:182.73px;top:252.00px;font-size:12.2px;line-height:16px;transform:scaleX(1.0297);color:#000;">Green-Terra</span>
<span id="t67" class="t " style="left:278.35px;top:252.00px;font-size:12.2px;line-height:16px;transform:scaleX(1.0833);color:#000;">20/07/2018</span>
<span id="t68" class="t " style="left:368.71px;top:252.00px;font-size:12.2px;line-height:16px;transform:scaleX(1.0825);color:#000;">20/07/2018</span>
<span id="t69" class="t " style="left:451.60px;top:252.00px;font-size:12.2px;line-height:16px;transform:scaleX(1.0506);color:#000;">Presentation of</span>
<span id="t70" class="t " style="left:451.84px;top:270.00px;font-size:12.2px;line-height:16px;transform:scaleX(1.0506);color:#000;">new products and</span>
<span id="t71" class="t " style="left:452.27px;top:288.00px;font-size:12.2px;line-height:16px;transform:scaleX(0.9872);color:#000;">services</span>
<span id="t72" class="t " style="left:562.30px;top:252.00px;font-size:12.2px;line-height:16px;transform:scaleX(1.0183);color:#000;">$650.00</span>
<span id="t73" class="t " style="left:522.36px;top:316.00px;font-size:12.2px;line-height:16px;font-weight:700;color:#000;">Total:</span>
<span id="t74" class="t " style="left:562.29px;top:316.00px;font-size:12.2px;line-height:16px;transform:scaleX(1.0294);color:#000;">$4,520.00</span>
<span id="t75" class="t " style="left:499.62px;top:353.00px;font-size:12.2px;line-height:16px;transform:scaleX(0.9607);font-weight:700;color:#000;">Discount:</span>
<span id="t76" class="t " style="left:562.19px;top:353.00px;font-size:12.2px;line-height:16px;transform:scaleX(0.9450);color:#000;">5%</span>
<span id="t77" class="t " style="left:489.53px;top:391.00px;font-size:12.2px;line-height:16px;transform:scaleX(0.9677);font-weight:700;color:#000;">Discounted</span>
<span id="t78" class="t " style="left:505.73px;top:409.00px;font-size:12.2px;line-height:16px;transform:scaleX(1.0143);font-weight:700;color:#000;">amount:</span>
<span id="t79" class="t " style="left:562.37px;top:391.00px;font-size:12.2px;line-height:16px;transform:scaleX(1.0338);font-weight:700;color:#000;">$4,294.00</span>
</div>
</div>
<div id="status">
<div class="abs" style="left:713px;top:0;width:50px;height:27px;background:#c8c6c4"></div>
<span id="t80" class="t " style="left:9.83px;top:5.00px;font-size:13px;line-height:17px;transform:scaleX(0.9980);">Page 1 of 1</span>
<span id="t81" class="t " style="left:101.80px;top:5.00px;font-size:13px;line-height:17px;transform:scaleX(1.0149);">51 words</span>
<span id="t82" class="t " style="left:219.67px;top:5.00px;font-size:13px;line-height:17px;transform:scaleX(0.9777);">English (United States)</span>
<span id="t83" class="t " style="left:614.92px;top:5.00px;font-size:13px;line-height:17px;transform:scaleX(0.9318);">Focus</span>
<span id="t84" class="t " style="left:992.72px;top:5.00px;font-size:13px;line-height:17px;transform:scaleX(0.9401);">75%</span>
<svg class="abs" style="left:0;top:0" width="1" height="1" ><g transform="translate(0 -720)"><path d="M186.2 740 H180.7 V725.7 H186.4 Q188.6 725.7 188.6 727.6 Q188.6 725.7 190.8 725.7 H196.3 V732.4 M188.6 727.4 V735.2" fill="none" stroke="#555" stroke-width="1.4"/><path d="M186.7 737.1 L190.6 741 L197.1 734.6" fill="none" stroke="#555" stroke-width="1.4"/></g></svg>
<svg class="abs" style="left:0;top:0" width="1" height="1" ><g transform="translate(0 -720)"><path d="M380.4 739.6 H375.1 V726.1 H391 V731" fill="none" stroke="#555" stroke-width="1.4"/><path d="M375.1 728.9 H391" stroke="#555" stroke-width="1.3"/><path d="M377.6 731.2 H381 M377.6 733.8 H379.6 M377.6 736.4 H379.6" stroke="#555" stroke-width="1.2"/><circle cx="386.1" cy="736" r="5.1" fill="#f8f8f8" stroke="#555" stroke-width="1.4"/><circle cx="386.1" cy="736" r="2.3" fill="#484644"/></g></svg>
<svg class="abs" style="left:0;top:0" width="1" height="1" ><g transform="translate(0 -720)"><path d="M594.7 728.2 V725.2 H597.7 M608.6 725.2 H611.6 V728.2 M611.6 738 V741 H608.6 M597.7 741 H594.7 V738" fill="none" stroke="#555" stroke-width="1.3"/><path d="M599.1 727.7 H604.6 L607.4 730.6 V738.1 H599.1 Z M604.3 727.7 V730.9 H607.4" fill="none" stroke="#555" stroke-width="1.3"/></g></svg>
<svg class="abs" style="left:0;top:0" width="1" height="1" ><g transform="translate(0 -720)"><path d="M679.9 724.9 H685.6 Q687.5 724.9 687.5 726.4 Q687.5 724.9 689.4 724.9 H695 V738.6 H689.3 L687.5 740.2 L685.7 738.6 H679.9 Z" fill="#fff" stroke="#555" stroke-width="1.3"/><path d="M687.5 725.6 V740.2" stroke="#555" stroke-width="1.3"/><path d="M681.9 728.4 H685.4 M681.9 733.4 H685.4 M689.6 728.4 H693.1 M689.6 733.4 H693.1" stroke="#333" stroke-width="1.3"/><path d="M681.9 730.8 H685.4 M681.9 735.9 H685.4 M689.6 730.8 H693.1 M689.6 735.9 H693.1" stroke="#8a8886" stroke-width="1.5"/></g></svg>
<svg class="abs" style="left:0;top:0" width="1" height="1" ><g transform="translate(0 -720)"><rect x="731.4" y="724.9" width="12" height="16.1" fill="#fff" stroke="#484644" stroke-width="1.6"/><path d="M733.5 727.4 H741.7 M733.5 732.4 H741.7 M733.5 737.4 H741.7" stroke="#2b2b2b" stroke-width="1.3"/><path d="M733.5 729.9 H741.7 M733.5 734.9 H741.7" stroke="#8a8886" stroke-width="1.5"/></g></svg>
<svg class="abs" style="left:0;top:0" width="1" height="1" ><g transform="translate(0 -720)"><path d="M786 739.7 H779.9 V725.1 H794.9 V731" fill="#fff" stroke="#555" stroke-width="1.5"/><path d="M782.3 727.5 H792.8 M782.3 732.4 H784.8 M782.3 737.3 H784" stroke="#333" stroke-width="1.2"/><path d="M782.3 729.9 H788.4 M782.3 734.8 H784.6" stroke="#8a8886" stroke-width="1.3"/><circle cx="791.1" cy="736" r="5.7" fill="#484644"/><path d="M786 736 H796.2 M791.1 730.8 V741.2" stroke="#d8d6d4" stroke-width="1.1"/><ellipse cx="791.1" cy="736" rx="2.9" ry="5" fill="none" stroke="#bdbbb9" stroke-width="0.8"/></g></svg>
<svg class="abs" style="left:0;top:0" width="1" height="1" ><g transform="translate(0 -720)"><path d="M819.8 732.8 H829.6 M967 732.8 H976.4 M971.7 728.1 V737.5" stroke="#555" stroke-width="1.3"/><path d="M835.8 732.8 H960.8" stroke="#a19f9d" stroke-width="1"/><path d="M898.4 729.6 V736.2" stroke="#a19f9d" stroke-width="1"/><rect x="879" y="726" width="6" height="14" fill="#8a8886"/></g></svg>
</div>
<div class="wb" style="left:0;top:44px;width:1px;height:703px"></div>
<div class="wb" style="left:1049px;top:44px;width:1px;height:703px"></div>
<div class="wb" style="left:0;top:746px;width:1050px;height:1px"></div>
</div></body></html>
